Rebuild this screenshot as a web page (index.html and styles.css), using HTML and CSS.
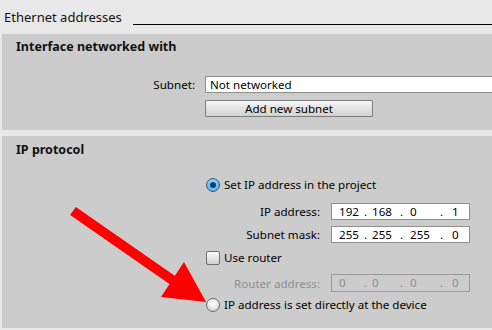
FILE: index.html
```html
<!DOCTYPE html>
<html>
<head>
<meta charset="utf-8">
<link rel="stylesheet" href="styles.css">
</head>
<body>
<div class="header">
  <span class="title">Ethernet addresses</span>
  <span class="rule"></span>
</div>
<section class="panel panel-iface">
  <h2 class="heading">Interface networked with</h2>
  <div class="subnet-row">
    <label class="subnet-label">Subnet:</label>
    <div class="text-input">Not networked</div>
  </div>
  <div class="btn-row">
    <button class="btn">Add new subnet</button>
  </div>
</section>
<section class="panel panel-ip">
  <h2 class="heading">IP protocol</h2>
  <div class="options">
    <div class="opt-row opt-first">
      <span class="radio radio-on"><span class="dot"></span></span>
      <span class="opt-text">Set IP address in the project</span>
    </div>
    <div class="field-row field-ip">
      <span class="field-label">IP address:</span>
      <div class="ip-input">
        <span class="o1">192</span><span class="d1">.</span><span class="o2">168</span><span class="d2">.</span><span class="o3">0</span><span class="d3">.</span><span class="o4">1</span>
      </div>
    </div>
    <div class="field-row field-mask">
      <span class="field-label">Subnet mask:</span>
      <div class="ip-input">
        <span class="o1">255</span><span class="d1">.</span><span class="o2">255</span><span class="d2">.</span><span class="o3">255</span><span class="d3">.</span><span class="o4">0</span>
      </div>
    </div>
    <div class="opt-row opt-check">
      <span class="checkbox"></span>
      <span class="opt-text">Use router</span>
    </div>
    <div class="field-row field-router disabled">
      <span class="field-label">Router address:</span>
      <div class="ip-input ip-disabled">
        <span class="o1">0</span><span class="d1">.</span><span class="o2">0</span><span class="d2">.</span><span class="o3">0</span><span class="d3">.</span><span class="o4">0</span>
      </div>
    </div>
    <div class="opt-row opt-last">
      <span class="radio"></span>
      <span class="opt-text">IP address is set directly at the device</span>
    </div>
  </div>
</section>
<svg class="arrow" width="492" height="330" viewBox="0 0 492 330">
  <line x1="73" y1="211" x2="178" y2="284" stroke="#ff0000" stroke-width="10"/>
  <polygon points="184,262 161,297 206,302" fill="#ff0000"/>
</svg>
</body>
</html>
```

FILE: styles.css
```css
* { box-sizing: border-box; }
html, body {
  margin: 0;
  padding: 0;
}
body {
  width: 492px;
  height: 330px;
  overflow: hidden;
  background: #e8e8e8;
  font-family: "Noto Sans", "Open Sans", sans-serif;
  font-size: 11.6px;
  color: #000;
  position: relative;
}
.header {
  height: 34px;
  display: flex;
  align-items: flex-start;
  padding-left: 4px;
}
.title {
  font-size: 13px;
  line-height: 16px;
  margin-top: 9px;
  color: #111;
}
.rule {
  flex: 1;
  height: 1px;
  background: #000;
  margin-top: 24px;
  margin-left: 11px;
}
.panel {
  margin-left: 2px;
  background: #cccccc;
}
.panel-iface {
  height: 96px;
  margin-bottom: 6px;
  padding-top: 5px;
}
.panel-ip {
  height: 192px;
  padding-top: 6px;
}
.heading {
  margin: 0;
  padding-left: 14px;
  font-size: 12.5px;
  font-weight: bold;
  line-height: 16px;
  color: #111;
}
.subnet-row {
  display: flex;
  align-items: center;
  margin-top: 21px;
  height: 17px;
}
.subnet-label {
  width: 193px;
  text-align: right;
  margin-right: 10px;
}
.text-input {
  flex: 1;
  height: 17px;
  background: #fff;
  border: 1px solid #8f8f8f;
  border-right: none;
  padding-left: 4px;
  line-height: 15px;
}
.btn-row {
  margin-top: 7px;
  padding-left: 203px;
}
.btn {
  width: 168px;
  height: 17px;
  padding: 0;
  margin: 0;
  font: inherit;
  line-height: 15px;
  color: #000;
  border: 1px solid #7d7d7d;
  border-radius: 1px;
  background: linear-gradient(#f6f6f6, #e2e2e2 50%, #d2d2d2);
  text-align: center;
}
.options {
  padding-left: 204px;
}
.opt-row {
  display: flex;
  align-items: center;
  height: 16px;
}
.opt-first { margin-top: 19px; }
.opt-check { margin-top: 7px; }
.opt-last { margin-top: 5px; }
.opt-text {
  margin-left: 4px;
  line-height: 16px;
}
.radio {
  width: 14px;
  height: 14px;
  border-radius: 50%;
  border: 1px solid #6a6a6a;
  background: radial-gradient(circle at 50% 35%, #ffffff 0%, #ececec 45%, #bdbdbd 100%);
  display: flex;
  align-items: center;
  justify-content: center;
  flex: none;
}
.radio-on {
  border-color: #3d5f7d;
  background: radial-gradient(circle at 50% 40%, #bfe6fb 0%, #6ac0ec 55%, #2f8fc8 100%);
}
.dot {
  width: 6px;
  height: 6px;
  border-radius: 50%;
  background: #0a3a7a;
}
.checkbox {
  width: 14px;
  height: 14px;
  border: 1px solid #6d6d6d;
  border-radius: 2px;
  background: linear-gradient(#fbfbfb, #e4e4e4 50%, #cfcfcf);
  flex: none;
}
.field-row {
  display: flex;
  align-items: center;
  height: 17px;
}
.field-ip { margin-top: 10px; }
.field-mask { margin-top: 6px; }
.field-router { margin-top: 8px; height: 18px; }
.field-label {
  width: 114px;
  text-align: right;
  margin-right: 11px;
}
.ip-input {
  width: 139px;
  height: 17px;
  background: #fff;
  border: 1px solid #8f8f8f;
  display: flex;
  padding-left: 7px;
  line-height: 15px;
}
.ip-disabled {
  height: 18px;
  background: transparent;
  border-color: #9a9a9a;
  line-height: 16px;
}
.disabled { color: #8e8e8e; }
.o1 { width: 25px; }
.d1 { width: 8px; }
.o2 { width: 28px; }
.d2 { width: 10px; }
.o3 { width: 30px; }
.d3 { width: 12px; }
.arrow {
  position: absolute;
  left: 0;
  top: 0;
  pointer-events: none;
}
```
